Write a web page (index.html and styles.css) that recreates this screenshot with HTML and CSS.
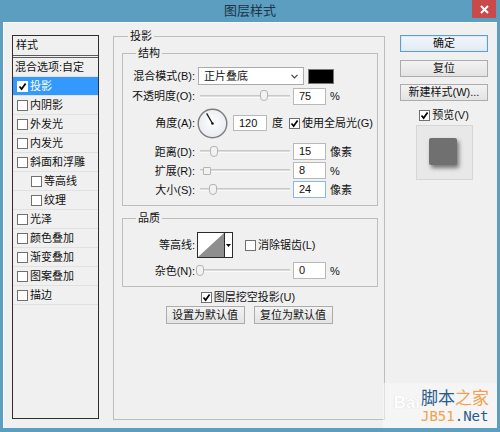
FILE: index.html
```html
<!DOCTYPE html>
<html lang="zh-CN">
<head>
<meta charset="utf-8">
<title>图层样式</title>
<link rel="stylesheet" href="styles.css">
</head>
<body>
<div class="window">
  <div class="titlebar">
    <div class="title">图层样式</div>
    <div class="close"><svg width="9" height="9" viewBox="0 0 9 9"><path d="M1 1L8 8M8 1L1 8" stroke="#fff" stroke-width="2"/></svg></div>
  </div>
  <div class="client">
    <div class="stylelist">
      <div class="list-head">样式</div>
      <div class="item plain">混合选项:自定</div>
      <div class="item selected"><span class="cb"><svg width="9" height="9" viewBox="0 0 9 9"><path d="M1.5 4.5L3.6 7L7.6 1.5" fill="none" stroke="#000" stroke-width="1.7"/></svg></span>投影</div>
      <div class="item"><span class="cb"></span>内阴影</div>
      <div class="item"><span class="cb"></span>外发光</div>
      <div class="item"><span class="cb"></span>内发光</div>
      <div class="item"><span class="cb"></span>斜面和浮雕</div>
      <div class="item sub"><span class="cb"></span>等高线</div>
      <div class="item sub"><span class="cb"></span>纹理</div>
      <div class="item"><span class="cb"></span>光泽</div>
      <div class="item"><span class="cb"></span>颜色叠加</div>
      <div class="item"><span class="cb"></span>渐变叠加</div>
      <div class="item"><span class="cb"></span>图案叠加</div>
      <div class="item"><span class="cb"></span>描边</div>
    </div>

    <fieldset class="panel">
      <legend class="outer-legend">投影</legend>
      <fieldset class="group structure">
        <legend class="inner-legend">结构</legend>
        <div class="row r1">
          <span class="lbl">混合模式(B):</span>
          <div class="select"><span>正片叠底</span><svg width="7" height="5" viewBox="0 0 7 5"><path d="M0.5 0.8L3.5 3.8L6.5 0.8" fill="none" stroke="#444" stroke-width="1.2"/></svg></div>
          <span class="swatch"></span>
        </div>
        <div class="row r2">
          <span class="lbl">不透明度(O):</span>
          <div class="slider"><span class="track"></span><span class="thumb" style="left:71%"></span></div>
          <span class="num">75</span><span class="unit">%</span>
        </div>
        <div class="row r3">
          <span class="lbl">角度(A):</span>
          <svg class="dial" width="31" height="31" viewBox="0 0 31 31">
            <defs><radialGradient id="dg" cx="50%" cy="45%" r="60%"><stop offset="0" stop-color="#ffffff"/><stop offset="1" stop-color="#e4e9ef"/></radialGradient></defs>
            <circle cx="15.5" cy="15.5" r="14.3" fill="url(#dg)" stroke="#7d7d7d" stroke-width="1.4"/>
            <path d="M15.5 15.5L9.6 5.4" stroke="#1a1a1a" stroke-width="1.3"/>
            <circle cx="15.5" cy="15.5" r="1.3" fill="#1a1a1a"/>
          </svg>
          <span class="num wide">120</span><span class="unit deg">度</span>
          <span class="cb global"><svg width="9" height="9" viewBox="0 0 9 9"><path d="M1.5 4.5L3.6 7L7.6 1.5" fill="none" stroke="#000" stroke-width="1.7"/></svg></span><span class="cblabel">使用全局光(G)</span>
        </div>
        <div class="row r4">
          <span class="lbl">距离(D):</span>
          <div class="slider"><span class="track"></span><span class="thumb" style="left:15%"></span></div>
          <span class="num">15</span><span class="unit">像素</span>
        </div>
        <div class="row r5">
          <span class="lbl">扩展(R):</span>
          <div class="slider"><span class="track"></span><span class="thumb square" style="left:8%"></span></div>
          <span class="num">8</span><span class="unit">%</span>
        </div>
        <div class="row r6">
          <span class="lbl">大小(S):</span>
          <div class="slider"><span class="track"></span><span class="thumb" style="left:14%"></span></div>
          <span class="num focus">24</span><span class="unit">像素</span>
        </div>
      </fieldset>

      <fieldset class="group quality">
        <legend class="inner-legend">品质</legend>
        <div class="row q1">
          <span class="lbl">等高线:</span>
          <div class="contour">
            <svg width="26" height="24" viewBox="0 0 26 24"><rect width="26" height="24" fill="#fff"/><path d="M0 24L26 0V24Z" fill="#8e8e8e"/></svg>
            <span class="drop"><svg width="5" height="3" viewBox="0 0 5 3"><path d="M0 0H5L2.5 3Z" fill="#000"/></svg></span>
          </div>
          <span class="cb anti"></span><span class="cblabel">消除锯齿(L)</span>
        </div>
        <div class="row q2">
          <span class="lbl">杂色(N):</span>
          <div class="slider"><span class="track"></span><span class="thumb" style="left:0%"></span></div>
          <span class="num">0</span><span class="unit">%</span>
        </div>
      </fieldset>

      <div class="knockout"><span class="cb"><svg width="9" height="9" viewBox="0 0 9 9"><path d="M1.5 4.5L3.6 7L7.6 1.5" fill="none" stroke="#000" stroke-width="1.7"/></svg></span><span class="cblabel">图层挖空投影(U)</span></div>
      <div class="defaults">
        <button class="btn">设置为默认值</button>
        <button class="btn">复位为默认值</button>
      </div>
    </fieldset>

    <div class="side">
      <button class="btn side-btn primary">确定</button>
      <button class="btn side-btn b2">复位</button>
      <button class="btn side-btn b3">新建样式(W)...</button>
      <div class="preview-check"><span class="cb"><svg width="9" height="9" viewBox="0 0 9 9"><path d="M1.5 4.5L3.6 7L7.6 1.5" fill="none" stroke="#000" stroke-width="1.7"/></svg></span><span class="cblabel">预览(V)</span></div>
      <div class="preview"><span class="swatch-preview"></span></div>
    </div>
  </div>

  <div class="watermark">
    <span class="bai">Bai</span>
    <div class="wm-text">
      <div class="wm-cn"><span class="blue">脚本</span><span class="orange">之家</span></div>
      <div class="wm-en"><span class="orange">JB51</span><span class="blue">.Net</span></div>
    </div>
  </div>
</div>
</body>
</html>
```

FILE: styles.css
```css
* { box-sizing: border-box; }
html, body { margin: 0; padding: 0; }
body {
  width: 500px;
  height: 432px;
  overflow: hidden;
  font-family: "Liberation Sans", "Noto Sans CJK SC", sans-serif;
  font-size: 11px;
  line-height: 16px;
  color: #111;
}

.window {
  position: relative;
  width: 500px;
  height: 432px;
  background: #5b9ec0;
  display: flex;
  flex-direction: column;
  padding: 0 3px 4px;
}

.titlebar {
  height: 22px;
  flex: none;
  display: grid;
  grid-template-columns: 1fr auto 1fr;
  align-items: start;
}
.title {
  grid-column: 2;
  font-size: 13px;
  line-height: 22px;
  color: #1d3547;
}
.close {
  grid-column: 3;
  justify-self: end;
  width: 24px;
  height: 18px;
  margin-right: 1px;
  background: #c84a4b;
  display: flex;
  align-items: center;
  justify-content: center;
}

.client {
  flex: 1;
  background: #f0f0f0;
  box-shadow: inset 1px 1px 0 #fbfbfb;
  display: flex;
  align-items: flex-start;
  padding: 0 9px;
}

/* left style list */
.stylelist {
  flex: none;
  width: 87px;
  height: 384px;
  margin-top: 13px;
  border: 1px solid #2e2e2e;
  background: #f0f0f0;
}
.list-head {
  height: 22px;
  line-height: 19px;
  padding-left: 3px;
  border-bottom: 3px double #5a5a5a;
}
.item {
  height: 19px;
  display: flex;
  align-items: center;
  padding-left: 4px;
  border-bottom: 1px solid #e1e1e1;
  white-space: nowrap;
}
.item.plain { padding-left: 2px; }
.item.sub { padding-left: 18px; }
.item.selected { background: #3399ff; color: #fff; }

.cb {
  flex: none;
  width: 11px;
  height: 11px;
  border: 1px solid #707070;
  background: #fff;
  display: inline-flex;
  align-items: center;
  justify-content: center;
  margin-right: 2px;
}
.selected .cb { border-color: #fff; }

/* middle panel */
fieldset { margin: 0; min-width: 0; }
legend { padding: 0 2px; height: 16px; line-height: 16px; font-size: 11px; }

.panel {
  flex: none;
  width: 272px;
  height: 392px;
  margin: 6px 0 0 14px;
  padding: 1px 6px 0 8px;
  border: 1px solid #bdbdbd;
}
.outer-legend { margin-left: 6px; }

.group {
  padding: 6px 0 7px;
  border: 1px solid #bdbdbd;
}
.inner-legend { margin-left: 13px; }
.quality { margin-top: 4px; }

.row { display: flex; align-items: center; }
.lbl {
  flex: none;
  width: 74px;
  text-align: right;
  padding-right: 2px;
  white-space: nowrap;
}
.r1 { height: 18px; }
.r2 { height: 16px; margin-top: 3px; }
.r3 { height: 30px; margin-top: 4px; }
.r4 { height: 17px; margin-top: 5px; }
.r5, .r6 { height: 17px; margin-top: 2px; }
.q1 { height: 26px; }
.q2 { height: 17px; margin-top: 4px; }

.select {
  flex: none;
  width: 106px;
  height: 18px;
  margin-left: 1px;
  border: 1px solid #ababab;
  background: #fff;
  display: flex;
  align-items: center;
  justify-content: space-between;
  padding: 0 5px 0 5px;
}
.swatch {
  flex: none;
  width: 26px;
  height: 15px;
  margin-left: 4px;
  background: #000;
  border: 1px solid #777;
}

.slider {
  position: relative;
  flex: none;
  width: 90px;
  height: 14px;
  margin-left: 3px;
  display: flex;
  align-items: center;
}
.track {
  display: block;
  width: 100%;
  height: 3px;
  background: #dcdcdc;
  border-top: 1px solid #c8c8c8;
  border-bottom: 1px solid #fafafa;
}
.thumb {
  position: absolute;
  top: 1px;
  width: 8px;
  height: 11px;
  transform: translateX(-50%);
  background: #f2f2f2;
  border: 1px solid #b4b4b4;
  border-radius: 3px 3px 4px 4px;
}
.thumb.square { top: 3px; height: 8px; border-radius: 1px; }

.num {
  flex: none;
  width: 33px;
  height: 17px;
  margin-left: 3px;
  padding-left: 5px;
  line-height: 15px;
  border: 1px solid #b9b9b9;
  background: #fff;
}
.num.wide { width: 34px; margin-left: 5px; height: 16px; }
.num.focus { border-color: #8ab8e4; }
.unit { margin-left: 4px; }
.unit.deg { margin-left: 5px; }
.dial { flex: none; display: block; }
.cb.global { margin-left: 6px; }
.cblabel { white-space: nowrap; }

.contour {
  flex: none;
  width: 36px;
  height: 26px;
  border: 1px solid #2a2a2a;
  display: flex;
}
.contour svg { display: block; }
.drop {
  flex: 1;
  border-left: 1px solid #2a2a2a;
  background: #fff;
  display: flex;
  align-items: center;
  justify-content: center;
}
.cb.anti { margin-left: 12px; }

.knockout {
  height: 16px;
  margin-top: 2px;
  display: flex;
  align-items: center;
  justify-content: center;
  padding-right: 4px;
}
.defaults {
  margin-top: 1px;
  display: flex;
  justify-content: center;
  gap: 9px;
  padding-right: 2px;
}

.btn {
  font-family: "Liberation Sans", "Noto Sans CJK SC", sans-serif;
  font-size: 11px;
  line-height: 15px;
  color: #111;
  width: 79px;
  height: 18px;
  padding: 0;
  margin: 0;
  border: 1px solid #acacac;
  background: linear-gradient(#f3f3f3, #e3e3e3);
}

/* right column */
.side {
  flex: none;
  width: 88px;
  margin: 13px 0 0 15px;
  display: flex;
  flex-direction: column;
  align-items: center;
}
.side-btn { width: 88px; height: 17px; }
.side-btn.primary {
  border-color: #5c9fd8;
  background: linear-gradient(#f1f6fb, #e2ebf4);
  box-shadow: inset 0 0 0 1px #dbe9f7;
}
.b2 { margin-top: 8px; }
.b3 { margin-top: 7px; }
.preview-check {
  height: 14px;
  margin-top: 7px;
  display: flex;
  align-items: center;
}
.preview {
  width: 57px;
  height: 55px;
  margin-top: 3px;
  background: #e8e8e8;
  border: 1px solid #d6d6d6;
  display: flex;
  align-items: center;
  justify-content: center;
  padding: 0 2px 2px 0;
}
.swatch-preview {
  width: 28px;
  height: 27px;
  background: #707070;
  border-radius: 2px;
  box-shadow: 2px 3px 4px rgba(0, 0, 0, 0.5);
}

/* watermark overlay */
.watermark {
  position: absolute;
  right: 3px;
  bottom: 4px;
  width: 114px;
  height: 45px;
  background: rgba(250, 250, 250, 0.55);
  display: flex;
  align-items: center;
  justify-content: flex-end;
  padding-right: 8px;
}
.bai {
  font-family: "Liberation Sans", sans-serif;
  font-weight: bold;
  font-size: 17px;
  color: #ffffff;
  text-shadow: 0 0 1px #c8c8c8;
  margin-right: 1px;
  margin-top: -6px;
}
.wm-text { display: flex; flex-direction: column; }
.wm-cn {
  font-family: "Noto Sans CJK SC", sans-serif;
  font-size: 17px;
  line-height: 20px;
  letter-spacing: 0;
}
.wm-en {
  font-family: "DejaVu Sans Mono", monospace;
  font-size: 14px;
  line-height: 18px;
}
.blue { color: #2a5b8b; }
.orange { color: #f0a14e; }
```
